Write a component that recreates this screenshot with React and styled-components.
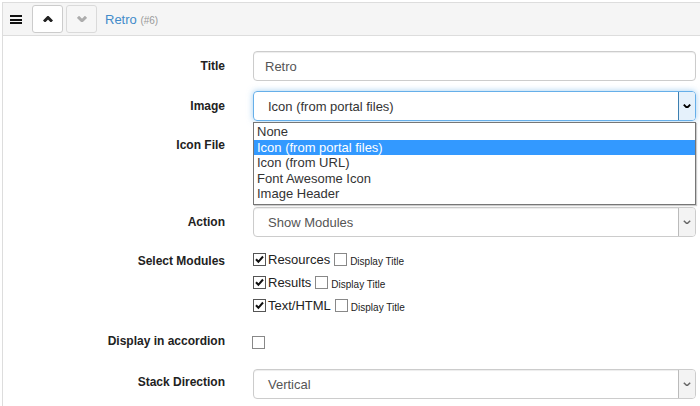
import React from "react";
import styled, { createGlobalStyle } from "styled-components";

const Global = createGlobalStyle`
  html, body { margin: 0; padding: 0; background: #fff; }
  body { font-family: "Liberation Sans", Arial, sans-serif; color: #333; }
`;

const Panel = styled.div`
  margin: 2px 0 0 2px;
  border-left: 1px solid #ddd;
  border-top: 1px solid #ddd;
  height: 404px;
  box-sizing: border-box;
  overflow: hidden;
`;

const Header = styled.div`
  display: flex;
  align-items: center;
  height: 33px;
  background: #f5f5f5;
  border-bottom: 1px solid #ddd;
  padding-left: 7px;
  box-sizing: border-box;
`;

const Burger = styled.span`
  display: flex;
  flex-direction: column;
  gap: 1.5px;
  width: 12px;
  margin-right: 10px;
  margin-top: 1px;
  span { height: 2px; background: #111; }
`;

const NavButton = styled.button`
  width: 31px;
  height: 28px;
  margin-right: 3px;
  border: 1px solid #ccc;
  border-radius: 3px;
  background: ${p => (p.$disabled ? "#f7f7f7" : "#fff")};
  opacity: ${p => (p.$disabled ? 0.65 : 1)};
  display: flex;
  align-items: center;
  justify-content: center;
  padding: 0;
  color: ${p => (p.$disabled ? "#888" : "#222")};
`;

const Title = styled.a`
  margin-left: 5px;
  font-size: 13px;
  color: #428bca;
  text-decoration: none;
  small { font-size: 10px; color: #999; }
`;

const Form = styled.div`
  display: grid;
  grid-template-columns: 222px 443px;
  column-gap: 28px;
  padding-top: 15px;
  align-items: start;
`;

const Label = styled.label`
  text-align: right;
  font-weight: bold;
  font-size: 12px;
  color: #222;
  line-height: 16px;
  padding-top: ${p => p.$pt ?? 7}px;
  margin-bottom: ${p => p.$mb ?? 10}px;
`;

const Cell = styled.div`
  position: relative;
  margin-top: ${p => p.$mt ?? 0}px;
  margin-bottom: ${p => p.$mb ?? 10}px;
  min-height: ${p => p.$h ?? 0}px;
`;

const Input = styled.div`
  height: 30px;
  box-sizing: border-box;
  border: 1px solid #ccc;
  border-radius: 4px;
  box-shadow: inset 0 1px 1px rgba(0,0,0,.075);
  font-size: 13px;
  color: #555;
  padding-left: 11px;
  display: flex;
  align-items: center;
`;

const Select = styled.div`
  height: 30px;
  box-sizing: border-box;
  border: 1px solid ${p => (p.$focus ? "#66afe9" : "#ccc")};
  border-radius: 4px;
  box-shadow: ${p => (p.$focus ? "0 0 6px rgba(102,175,233,.6)" : "inset 0 1px 1px rgba(0,0,0,.075)")};
  font-size: 13px;
  color: ${p => (p.$focus ? "#333" : "#555")};
  padding-left: 14px;
  display: flex;
  align-items: center;
  justify-content: space-between;
  overflow: hidden;
`;

const Arrow = styled.span`
  width: 16px;
  align-self: stretch;
  margin: 0;
  background: ${p => (p.$focus ? "#e5f1fb" : "#f3f3f3")};
  border-left: 1px solid ${p => (p.$focus ? "#3c7fb1" : "#bbb")};
  display: flex;
  align-items: center;
  justify-content: center;
  color: ${p => (p.$focus ? "#000" : "#666")};
`;

const Dropdown = styled.ul`
  position: absolute;
  top: -9px;
  left: 0;
  right: 0;
  margin: 0;
  padding: 1px 0 2px;
  list-style: none;
  background: #fff;
  border: 1px solid #767676;
  box-shadow: 1px 1px 1px rgba(0,0,0,.2);
  z-index: 5;
`;

const Option = styled.li`
  font-size: 13px;
  line-height: 15.5px;
  height: 15.5px;
  padding-left: 3px;
  color: ${p => (p.$active ? "#fff" : "#333")};
  background: ${p => (p.$active ? "#3399ff" : "transparent")};
`;

const Modules = styled.div`
  display: flex;
  flex-direction: column;
  gap: 8px;
  padding-top: 5px;
`;

const CheckRow = styled.div`
  display: flex;
  align-items: center;
  height: 15px;
  font-size: 13px;
  color: #222;
  margin-top: ${p => p.$mt ?? 0}px;
  margin-left: ${p => p.$ml ?? 0}px;
`;

const Box = styled.span`
  width: 13px;
  height: 13px;
  box-sizing: border-box;
  border: 1px solid ${p => (p.$checked ? "#555" : "#888")};
  background: #fff;
  display: inline-flex;
  align-items: center;
  justify-content: center;
  margin-right: 2px;
  flex: none;
`;

const Small = styled.span`
  font-size: 10px;
  margin-left: 1px;
  padding-top: 3px;
  color: #222;
`;

const Gap = styled.span`
  width: 4px;
`;

const Chevron = ({ up, size = 9, w = 3 }) => (
  <svg width={size} height={size * 0.6} viewBox="0 0 10 6">
    <path d={up ? "M1 5.5 L5 1.5 L9 5.5" : "M1 0.8 L5 4.8 L9 0.8"} fill="none" stroke="currentColor" strokeWidth={w} />
  </svg>
);

const Check = () => (
  <svg width="11" height="11" viewBox="0 0 11 11">
    <path d="M2 5.2 L4.4 7.8 L9 2.5" fill="none" stroke="#111" strokeWidth="2" />
  </svg>
);

const CheckBox = ({ checked }) => <Box $checked={checked}>{checked && <Check />}</Box>;

const modules = ["Resources", "Results", "Text/HTML"];
const options = ["None", "Icon (from portal files)", "Icon (from URL)", "Font Awesome Icon", "Image Header"];

export default function App() {
  return (
    <>
      <Global />
      <Panel>
        <Header>
          <Burger><span /><span /><span /></Burger>
          <NavButton><Chevron up size={10} w={3} /></NavButton>
          <NavButton $disabled><Chevron size={10} w={3} /></NavButton>
          <Title href="#">Retro <small>(#6)</small></Title>
        </Header>
        <Form>
          <Label>Title</Label>
          <Cell><Input>Retro</Input></Cell>

          <Label>Image</Label>
          <Cell>
            <Select $focus>Icon (from portal files)<Arrow $focus><Chevron size={8} w={2.4} /></Arrow></Select>
          </Cell>

          <Label $pt={6}>Icon File</Label>
          <Cell $h={76} $mb={0}>
            <Dropdown>
              {options.map((o, i) => <Option key={o} $active={i === 1}>{o}</Option>)}
            </Dropdown>
          </Cell>

          <Label>Action</Label>
          <Cell>
            <Select>Show Modules<Arrow><Chevron size={8} w={1.8} /></Arrow></Select>
          </Cell>

          <Label $pt={6} $mb={20}>Select Modules</Label>
          <Cell $mb={19}>
            <Modules>
              {modules.map(m => (
                <CheckRow key={m}>
                  <CheckBox checked />{m}<Gap /><CheckBox /><Small>Display Title</Small>
                </CheckRow>
              ))}
            </Modules>
          </Cell>

          <Label $pt={1} $mb={17}>Display in accordion</Label>
          <Cell $mb={17}>
            <CheckRow $mt={3} $ml={-1}><CheckBox /></CheckRow>
          </Cell>

          <Label>Stack Direction</Label>
          <Cell $mt={2}>
            <Select>Vertical<Arrow><Chevron size={8} w={1.8} /></Arrow></Select>
          </Cell>
        </Form>
      </Panel>
    </>
  );
}
